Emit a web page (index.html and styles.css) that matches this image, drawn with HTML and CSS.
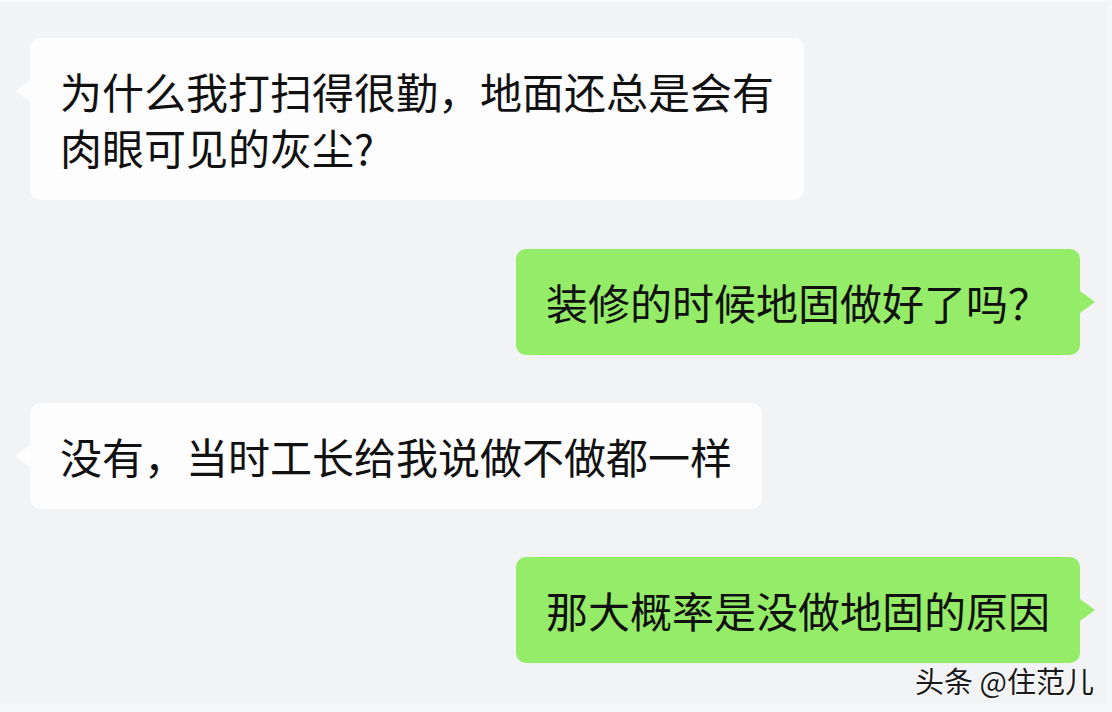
FILE: index.html
```html
<!DOCTYPE html>
<html lang="zh-CN">
<head>
<meta charset="utf-8">
<link rel="stylesheet" href="styles.css">
</head>
<body>
<div class="frame">
  <div class="chat">
    <div class="msg left">为什么我打扫得很勤，地面还总是会有肉眼可见的灰尘?</div>
    <div class="msg right">装修的时候地固做好了吗？</div>
    <div class="msg left">没有，当时工长给我说做不做都一样</div>
    <div class="msg right">那大概率是没做地固的原因</div>
  </div>
  <div class="watermark">头条 @住范儿</div>
</div>
</body>
</html>
```
FILE: styles.css
```css
html, body {
  margin: 0;
  padding: 0;
}
body {
  width: 1112px;
  height: 712px;
  overflow: hidden;
  background: #f2f3f5;
  font-family: "Noto Sans CJK SC", "Noto Sans", sans-serif;
}
.frame {
  position: relative;
  width: 1112px;
  height: 712px;
  box-sizing: border-box;
  border-top: 2px solid #f7f8f9;
  border-bottom: 9px solid #f6f7f8;
  border-right: 5px solid #f6f7f8;
}
.chat {
  display: flex;
  flex-direction: column;
  gap: 48px;
  padding: 36px 27px 0 30px;
}
.msg {
  position: relative;
  box-sizing: border-box;
  max-width: 774px;
  padding: 25px 30px 25px 30px;
  border-radius: 10px;
  font-size: 42px;
  line-height: 56px;
  color: #111111;
}
.msg.left {
  align-self: flex-start;
  background: #fdfdfe;
}
.msg.left:first-child {
  margin-bottom: 1px;
}
.msg.right {
  align-self: flex-end;
  background: #95ec69;
}
.msg.left::before {
  content: "";
  position: absolute;
  left: -15px;
  top: 42px;
  border-style: solid;
  border-width: 11px 15px 11px 0;
  border-color: transparent #fdfdfe transparent transparent;
}
.msg.right::after {
  content: "";
  position: absolute;
  right: -15px;
  top: 42px;
  border-style: solid;
  border-width: 11px 0 11px 15px;
  border-color: transparent transparent transparent #95ec69;
}
.watermark {
  position: absolute;
  left: 915px;
  top: 660px;
  font-size: 29px;
  line-height: 36px;
  color: #1a1a1a;
  text-shadow: 1px 1px 0 #ffffff, -1px 0 0 #ffffff;
  white-space: nowrap;
}
```
